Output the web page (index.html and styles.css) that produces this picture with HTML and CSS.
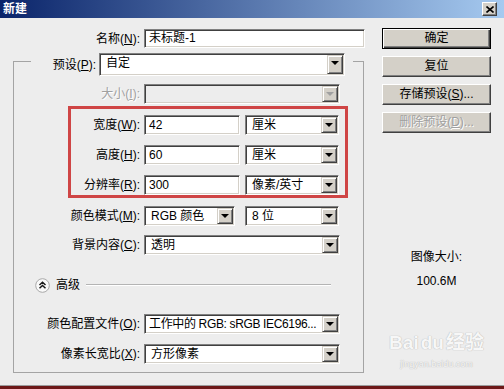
FILE: index.html
```html
<!DOCTYPE html>
<html lang="zh-CN">

<head>
  <meta charset="UTF-8">
  <title>新建</title>
  <link rel="stylesheet" href="styles.css">
</head>

<body>
  <div class="window">
    <div class="titlebar">
      <span class="title">新建</span>
      <span class="close">
        <svg width="8" height="7" viewBox="0 0 8 7"><path d="M0.5 0.5 L7.5 6.5 M7.5 0.5 L0.5 6.5" stroke="#000" stroke-width="1.6" /></svg>
      </span>
    </div>

    <div class="content">
      <div class="form">
        <div class="row name-row">
          <label class="lbl name-lbl">名称(<u>N</u>):</label>
          <div class="field name-field">未标题-1</div>
        </div>

        <fieldset class="group">
          <legend class="preset">
            <div class="preset-inner">
              <label class="lbl preset-lbl">预设(<u>P</u>):</label>
              <div class="select preset-select"><span class="val">自定</span><span class="arrow"></span></div>
            </div>
          </legend>

          <div class="row first-row">
            <label class="lbl wide disabled-text">大小(<u>I</u>):</label>
            <div class="select full disabled"><span class="val"></span><span class="arrow"></span></div>
          </div>

          <div class="highlight">
            <div class="row">
              <label class="lbl narrow">宽度(<u>W</u>):</label>
              <div class="field num">42</div>
              <div class="select unit"><span class="val">厘米</span><span class="arrow"></span></div>
            </div>
            <div class="row gap-row">
              <label class="lbl narrow">高度(<u>H</u>):</label>
              <div class="field num">60</div>
              <div class="select unit"><span class="val">厘米</span><span class="arrow"></span></div>
            </div>
            <div class="row gap-row">
              <label class="lbl narrow">分辨率(<u>R</u>):</label>
              <div class="field num">300</div>
              <div class="select unit"><span class="val">像素/英寸</span><span class="arrow"></span></div>
            </div>
          </div>

          <div class="row mode-row">
            <label class="lbl wide">颜色模式(<u>M</u>):</label>
            <div class="select mode"><span class="val">RGB 颜色</span><span class="arrow"></span></div>
            <div class="select unit"><span class="val">8 位</span><span class="arrow"></span></div>
          </div>

          <div class="row bg-row">
            <label class="lbl wide">背景内容(<u>C</u>):</label>
            <div class="select full"><span class="val">透明</span><span class="arrow"></span></div>
          </div>

          <div class="advanced">
            <svg class="adv-icon" width="15" height="15" viewBox="0 0 15 15">
              <circle cx="7.5" cy="7.5" r="6.8" fill="#fafafa" stroke="#a8a8a8" />
              <path d="M4.5 7 L7.5 4.2 L10.5 7 M4.5 10.3 L7.5 7.5 L10.5 10.3" fill="none" stroke="#1a1a1a" stroke-width="1.5" />
            </svg>
            <span class="adv-text">高级</span>
            <span class="adv-line"></span>
          </div>

          <div class="row profile-row">
            <label class="lbl wide">颜色配置文件(<u>O</u>):</label>
            <div class="select full"><span class="val tight">工作中的 RGB: sRGB IEC6196...</span><span class="arrow"></span></div>
          </div>

          <div class="row gap-row">
            <label class="lbl wide">像素长宽比(<u>X</u>):</label>
            <div class="select full"><span class="val">方形像素</span><span class="arrow"></span></div>
          </div>
        </fieldset>
      </div>

      <div class="side">
        <div class="btn btn-default">确定</div>
        <div class="btn">复位</div>
        <div class="btn">存储预设(<u>S</u>)...</div>
        <div class="btn btn-disabled">删除预设(<u>D</u>)...</div>

        <div class="size-info">
          <div>图像大小:</div>
          <div class="size-value">100.6M</div>
        </div>

        <div class="watermark">
          <div class="wm-logo">Bai<span class="wm-du">du</span>经验</div>
          <div class="wm-url">jingyan.baidu.com</div>
        </div>
      </div>
    </div>
  </div>
</body>

</html>
```

FILE: styles.css
```css
* {
  box-sizing: border-box;
}

body {
  margin: 0;
  background: #6d1818;
  font-family: "Liberation Sans", "Noto Sans CJK SC", sans-serif;
  font-size: 12px;
  color: #000;
}

.window {
  width: 504px;
  height: 386px;
  background: #ededed;
  border-bottom: 1px solid #9c9c9c;
}

.titlebar {
  height: 18px;
  background: linear-gradient(to right, #0a246a, #a6caf0);
  display: flex;
  align-items: center;
  justify-content: space-between;
  padding: 0 7px 0 3px;
}

.title {
  color: #fff;
  font-weight: bold;
  line-height: 16px;
}

.close {
  width: 15px;
  height: 14px;
  background: #d4d0c8;
  border: 1px solid;
  border-color: #fff #404040 #404040 #fff;
  box-shadow: inset -1px -1px #808080;
  display: flex;
  align-items: center;
  justify-content: center;
}

.content {
  display: flex;
}

.form {
  width: 382px;
  padding-top: 11px;
}

/* rows */
.row {
  display: flex;
  align-items: center;
  height: 20px;
}

.lbl {
  flex: none;
  text-align: right;
  line-height: 16px;
  white-space: nowrap;
  margin-right: 4px;
}

.name-row {
  height: 19px;
}

.name-lbl {
  width: 140px;
}

.wide {
  width: 126px;
}

.narrow {
  width: 69px;
}

.disabled-text {
  color: #a0a0a0;
  text-shadow: 1px 1px 0 #fff;
}

/* sunken fields */
.field,
.select {
  height: 20px;
  background: #fff;
  border: 1px solid;
  border-color: #808080 #fff #fff #808080;
  box-shadow: inset 1px 1px #404040, inset -1px -1px #d4d0c8;
  line-height: 16px;
  padding: 1px 0 1px 4px;
  white-space: nowrap;
  overflow: hidden;
}

.name-field {
  width: 221px;
  height: 19px;
  line-height: 15px;
}

.num {
  width: 96px;
  margin-right: 5px;
}

.select {
  display: flex;
  padding: 1px 1px 1px 0;
}

.select .val {
  flex: 1;
  padding-left: 6px;
  overflow: hidden;
}

.select .val.tight {
  padding-left: 4px;
  letter-spacing: -0.35px;
}

.select .arrow {
  flex: none;
  width: 16px;
  background: #d4d0c8;
  border: 1px solid;
  border-color: #d4d0c8 #404040 #404040 #d4d0c8;
  box-shadow: inset 1px 1px #fff, inset -1px -1px #808080;
  position: relative;
}

.select .arrow::after {
  content: "";
  position: absolute;
  left: 3px;
  top: 5px;
  border-left: 4px solid transparent;
  border-right: 4px solid transparent;
  border-top: 4px solid #000;
}

.select.disabled {
  background: #ededed;
}

.select.disabled .arrow::after {
  border-top-color: #a0a0a0;
}

.full {
  width: 196px;
}

.unit {
  width: 94px;
}

.mode {
  width: 91px;
  margin-right: 10px;
}

/* group box */
.group {
  margin: -1px 0 0 13px;
  width: 351px;
  padding: 0 0 8px 0;
  border: 1px solid #a4a4a4;
  min-width: 0;
}

.preset {
  margin-left: 17px;
  padding: 6px 8px 0 0;
}

.preset-inner {
  display: flex;
  align-items: center;
}

.preset-lbl {
  width: 65px;
  margin-right: 3px;
}

.preset-select {
  width: 246px;
  height: 23px;
}

.first-row {
  margin-top: 8px;
}

.highlight {
  margin: 2px 0 0 54px;
  width: 280px;
  border: 3px solid #cf4545;
  padding: 6px 0 0 0;
}

.gap-row {
  margin-top: 10px;
}

.mode-row {
  margin-top: 8px;
}

.bg-row {
  margin-top: 9px;
}

.advanced {
  display: flex;
  align-items: center;
  height: 16px;
  margin: 22px 32px 0 21px;
}

.adv-icon {
  flex: none;
}

.adv-text {
  margin-left: 6px;
  line-height: 16px;
}

.adv-line {
  flex: 1;
  margin-left: 6px;
  height: 2px;
  border-top: 1px solid #b4b4b4;
  border-bottom: 1px solid #fff;
}

.profile-row {
  margin-top: 21px;
}

/* buttons */
.side {
  width: 109px;
  padding-top: 10px;
  display: flex;
  flex-direction: column;
}

.btn {
  height: 21px;
  margin-bottom: 7px;
  background: #d4d0c8;
  border: 1px solid;
  border-color: #fff #404040 #404040 #fff;
  box-shadow: inset -1px -1px #808080;
  text-align: center;
  line-height: 18px;
  white-space: nowrap;
}

.btn-default {
  border-color: #000;
  box-shadow: inset 1px 1px #fff, inset -1px -1px #404040, inset -2px -2px #808080;
}

.btn-disabled {
  color: #a0a0a0;
  text-shadow: 1px 1px 0 #fff;
}

.size-info {
  margin-top: 110px;
  text-align: center;
  line-height: 14px;
}

.size-value {
  margin-top: 10px;
}

.watermark {
  margin-top: 44px;
  text-align: center;
  color: #f7f7f7;
  text-shadow: 0 0 1px #bdbdbd, 0 0 1px #bdbdbd;
}

.wm-logo {
  font-size: 19px;
  font-weight: bold;
  line-height: 22px;
}

.wm-du {
  margin: 0 2px;
}

.wm-url {
  font-size: 9px;
  line-height: 12px;
  margin-top: 4px;
}
```
